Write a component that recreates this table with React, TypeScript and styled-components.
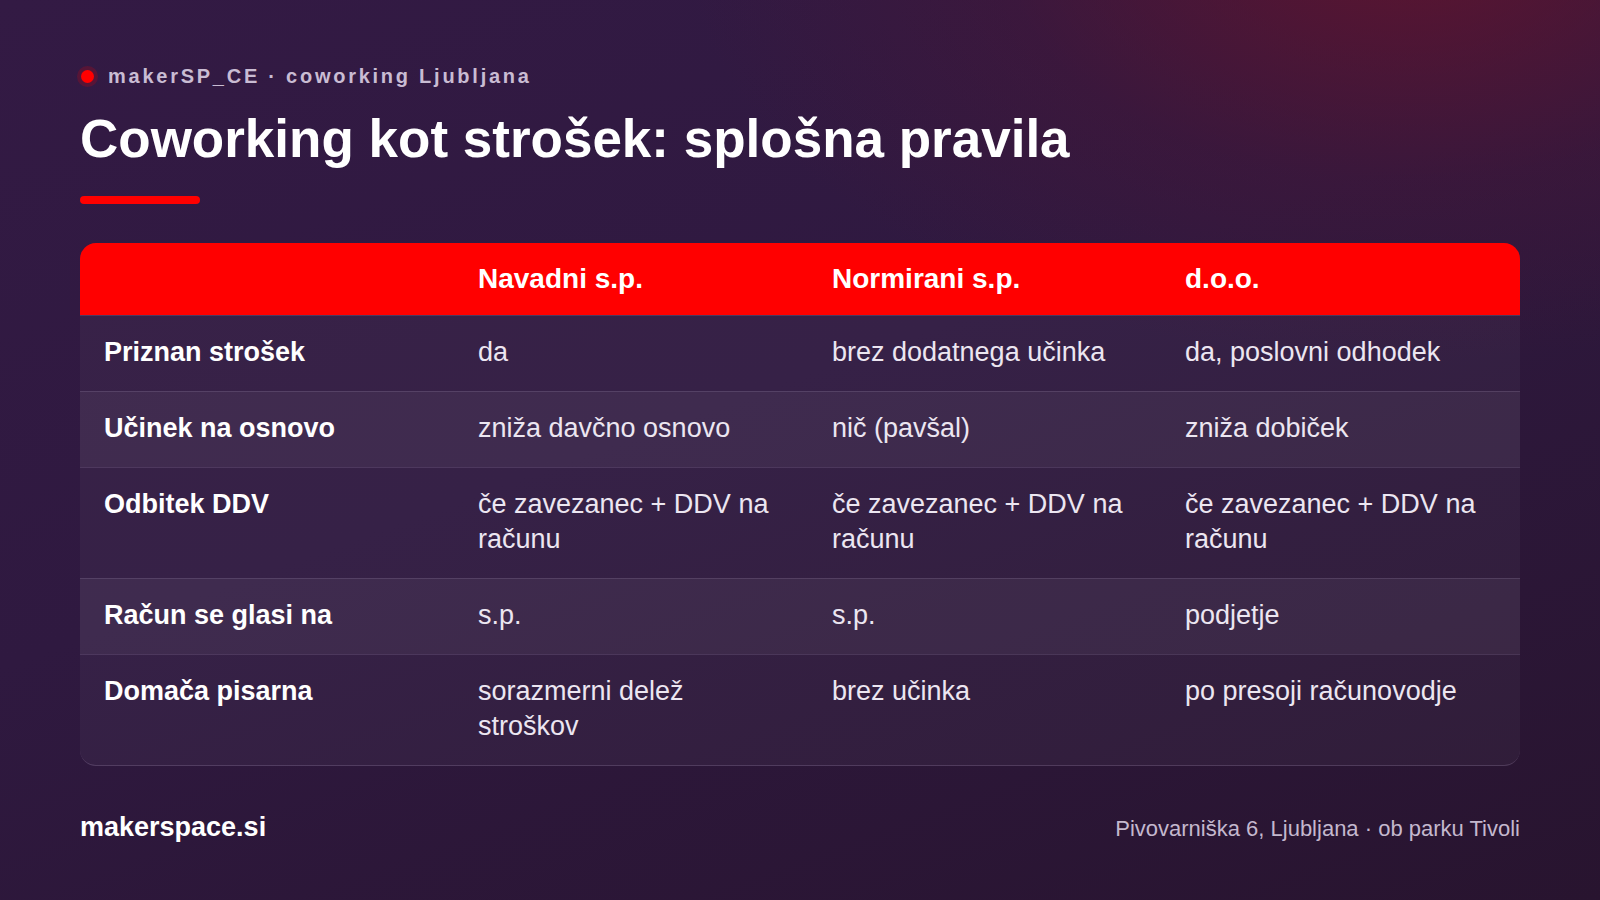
import React from "react";
import styled, { createGlobalStyle } from "styled-components";

const GlobalStyle = createGlobalStyle`
  html, body { margin: 0; padding: 0; }
  body {
    width: 1600px;
    height: 900px;
    overflow: hidden;
    font-family: "Liberation Sans", Arial, sans-serif;
  }
`;

const Page = styled.div`
  box-sizing: border-box;
  width: 1600px;
  height: 900px;
  padding: 63px 80px 0 80px;
  display: flex;
  flex-direction: column;
  color: #ffffff;
  background:
    radial-gradient(ellipse 900px 520px at 88% -6%, rgba(110, 18, 40, 0.7) 0%, rgba(80, 20, 50, 0.32) 45%, rgba(0, 0, 0, 0) 80%),
    linear-gradient(160deg, #331a44 0%, #2f1940 45%, #28142f 100%);
`;

const Eyebrow = styled.div`
  display: flex;
  align-items: center;
  gap: 14px;
  font-size: 20px;
  line-height: 26px;
  font-weight: 700;
  letter-spacing: 2.75px;
  color: #c9bcd3;
`;

const Dot = styled.span`
  width: 13px;
  height: 13px;
  margin-left: 1px;
  border-radius: 50%;
  background: #ff0000;
  box-shadow: 0 0 0 4px rgba(255, 0, 0, 0.18);
  flex: none;
`;

const Title = styled.h1`
  margin: 18px 0 0 0;
  font-size: 53px;
  line-height: 64px;
  font-weight: 700;
  letter-spacing: 0;
  color: #ffffff;
`;

const Accent = styled.div`
  width: 120px;
  height: 8px;
  border-radius: 4px;
  background: #ff0000;
  margin-top: 25px;
`;

const Table = styled.div`
  margin-top: 39px;
  border-radius: 16px;
  overflow: hidden;
  border-bottom: 1px solid rgba(200, 180, 220, 0.22);
  background: rgba(255, 255, 255, 0.015);
`;

const Row = styled.div<{ $head?: boolean; $alt?: boolean }>`
  display: grid;
  grid-template-columns: 374px 354px 353px 1fr;
  background: ${(p) =>
    p.$head ? "#ff0000" : p.$alt ? "rgba(255, 255, 255, 0.065)" : "rgba(255, 255, 255, 0.025)"};
  border-top: ${(p) => (p.$head ? "none" : "1px solid rgba(200, 180, 220, 0.16)")};
`;

const Cell = styled.div<{ $head?: boolean; $label?: boolean }>`
  padding: ${(p) => (p.$head ? "17px 24px 17px" : "19px 24px 21px")};
  font-size: ${(p) => (p.$head ? "28px" : "27px")};
  line-height: ${(p) => (p.$head ? "38px" : "35px")};
  font-weight: ${(p) => (p.$head || p.$label ? 700 : 400)};
  color: ${(p) => (p.$head || p.$label ? "#ffffff" : "#ece6f1")};
`;

const Footer = styled.div`
  margin-top: 46px;
  display: flex;
  justify-content: space-between;
  align-items: baseline;
`;

const Brand = styled.div`
  font-size: 27px;
  font-weight: 700;
  color: #ffffff;
`;

const Address = styled.div`
  font-size: 22px;
  color: #c4b8ce;
`;

const rows: [string, string, string, string][] = [
  ["Priznan strošek", "da", "brez dodatnega učinka", "da, poslovni odhodek"],
  ["Učinek na osnovo", "zniža davčno osnovo", "nič (pavšal)", "zniža dobiček"],
  ["Odbitek DDV", "če zavezanec + DDV na računu", "če zavezanec + DDV na računu", "če zavezanec + DDV na računu"],
  ["Račun se glasi na", "s.p.", "s.p.", "podjetje"],
  ["Domača pisarna", "sorazmerni delež stroškov", "brez učinka", "po presoji računovodje"],
];

export default function App() {
  return (
    <>
      <GlobalStyle />
      <Page>
        <Eyebrow>
          <Dot />
          <span>makerSP_CE · coworking Ljubljana</span>
        </Eyebrow>
        <Title>Coworking kot strošek: splošna pravila</Title>
        <Accent />
        <Table>
          <Row $head>
            <Cell $head />
            <Cell $head>Navadni s.p.</Cell>
            <Cell $head>Normirani s.p.</Cell>
            <Cell $head>d.o.o.</Cell>
          </Row>
          {rows.map((r, i) => (
            <Row key={r[0]} $alt={i % 2 === 1}>
              <Cell $label>{r[0]}</Cell>
              <Cell>{r[1]}</Cell>
              <Cell>{r[2]}</Cell>
              <Cell>{r[3]}</Cell>
            </Row>
          ))}
        </Table>
        <Footer>
          <Brand>makerspace.si</Brand>
          <Address>Pivovarniška 6, Ljubljana · ob parku Tivoli</Address>
        </Footer>
      </Page>
    </>
  );
}
